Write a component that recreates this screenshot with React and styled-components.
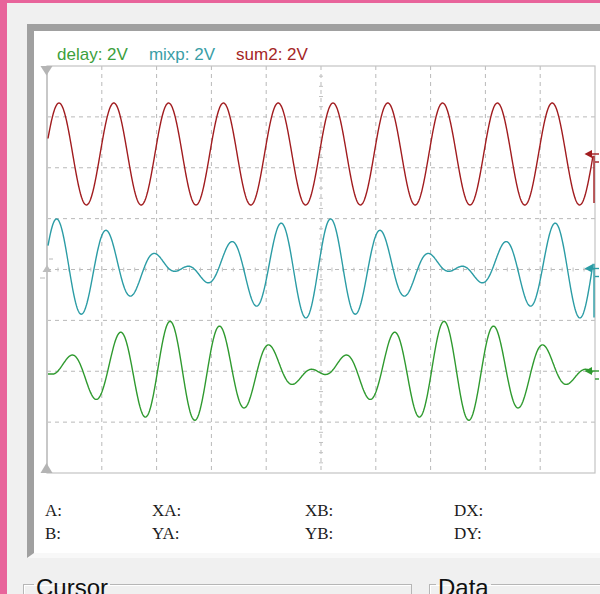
import React from "react";
import styled, { createGlobalStyle } from "styled-components";

// plot geometry, in page pixels
const LEFT = 47;
const RIGHT = 595;
const TOP = 66;
const BOTTOM = 473;
const DIV_X = (RIGHT - LEFT) / 10;
const DIV_Y = (BOTTOM - TOP) / 8;
const BEAT = DIV_X * 5;

const channels = [
  {
    name: "delay",
    color: "#2f9a2f",
    label: "#3ca03c",
    center: 371,
    drop: false,
    fn: (x) => {
      const t = Math.max(x, 54);
      return (
        371 -
        50 *
          Math.cos((Math.PI * (t - 180)) / BEAT) *
          Math.cos((2 * Math.PI * 5.5 * (t - 170)) / BEAT)
      );
    },
  },
  {
    name: "mixp",
    color: "#2b9ca5",
    label: "#3a9ea6",
    center: 268.5,
    drop: true,
    fn: (x) => {
      const u = x - 45;
      return (
        268.5 -
        50 *
          Math.cos((Math.PI * u) / BEAT) *
          Math.cos((2 * Math.PI * 5.5 * u) / BEAT - 1.476)
      );
    },
  },
  {
    name: "sum2",
    color: "#a11c1f",
    label: "#a42626",
    center: 154,
    drop: true,
    fn: (x) => 154 - 51 * Math.cos((2 * Math.PI * (x - 59)) / DIV_X),
  },
];

const tracePath = (fn) => {
  let d = "";
  for (let x = 48; x <= 593; x += 0.5) {
    d += (d ? "L" : "M") + x.toFixed(1) + "," + fn(x).toFixed(1);
  }
  return d;
};

const range = (n) => Array.from({ length: n }, (_, i) => i);

const Scope = () => {
  const cx = LEFT + DIV_X * 5;
  const cy = TOP + DIV_Y * 4;

  return (
    <Chart viewBox="34 65 566 420" width="566" height="420">
      {range(9).map((i) => (
        <GridLine
          key={"v" + i}
          x1={LEFT + DIV_X * (i + 1)}
          y1={TOP}
          x2={LEFT + DIV_X * (i + 1)}
          y2={BOTTOM}
        />
      ))}
      {range(7).map((i) => (
        <GridLine
          key={"h" + i}
          x1={LEFT}
          y1={TOP + DIV_Y * (i + 1)}
          x2={RIGHT}
          y2={TOP + DIV_Y * (i + 1)}
        />
      ))}
      {range(49).map((i) => (
        <Tick
          key={"tx" + i}
          x1={LEFT + (DIV_X / 5) * (i + 1)}
          y1={cy - 2}
          x2={LEFT + (DIV_X / 5) * (i + 1)}
          y2={cy + 2}
        />
      ))}
      {range(39).map((i) => (
        <Tick
          key={"ty" + i}
          x1={cx - 2}
          y1={TOP + (DIV_Y / 5) * (i + 1)}
          x2={cx + 2}
          y2={TOP + (DIV_Y / 5) * (i + 1)}
        />
      ))}

      <rect
        x={LEFT}
        y={TOP}
        width={RIGHT - LEFT}
        height={BOTTOM - TOP}
        fill="none"
        stroke="#c4c4c4"
        strokeWidth="1.2"
      />
      <line x1={LEFT} y1={TOP} x2={LEFT} y2={BOTTOM} stroke="#c8c8c8" strokeWidth="2" />

      {/* trigger / time markers */}
      <polygon points="40.5,66 52.5,66 46.5,75.5" fill="#b4b4b4" />
      <polygon points="40.5,473 52.5,473 46.5,463" fill="#b4b4b4" />
      <polygon points="42.5,272 51.5,272 47,265" fill="#bdbdbd" />
      <line x1="49" y1="259" x2="53" y2="259" stroke="#b8b8b8" />
      <line x1="40" y1="278" x2="45" y2="278" stroke="#b8b8b8" />

      {channels.map((ch) => {
        const last = ch.fn(593);
        return (
          <g key={ch.name} stroke={ch.color} fill="none" strokeWidth="1.4">
            <path d={tracePath(ch.fn)} strokeLinejoin="round" />
            {ch.drop && <line x1="594" y1={last} x2="594" y2={ch.center + 49} />}
            <polygon
              points={`584.5,${ch.center} 592,${ch.center - 4} 592,${ch.center + 4}`}
              fill={ch.color}
              stroke="none"
            />
            <line x1="591" y1={ch.center} x2="599" y2={ch.center} />
            <line x1="595" y1={ch.center + 8} x2="599" y2={ch.center + 8} />
          </g>
        );
      })}
    </Chart>
  );
};

const App = () => {
  return (
    <>
      <GlobalStyle />
      <Window>
        <Frame>
          <Legend>
            {channels.map((ch) => (
              <Trace key={ch.name} $color={ch.label}>
                {ch.name}: 2V
              </Trace>
            ))}
          </Legend>
          <Scope />
          <Readouts>
            <Cell>A:</Cell>
            <Cell>XA:</Cell>
            <Cell>XB:</Cell>
            <Cell>DX:</Cell>
            <Cell>B:</Cell>
            <Cell>YA:</Cell>
            <Cell>YB:</Cell>
            <Cell>DY:</Cell>
          </Readouts>
        </Frame>
        <Groups>
          <Group $width="389px" $inset="10px">
            <Caption>Cursor</Caption>
          </Group>
          <Group $width="200px" $inset="6px">
            <Caption>Data</Caption>
          </Group>
        </Groups>
      </Window>
    </>
  );
};

export default App;

const GlobalStyle = createGlobalStyle`
  html, body {
    margin: 0;
    width: 600px;
    height: 594px;
    overflow: hidden;
    background-color: #e8649b;
  }
`;

const Window = styled.div`
  margin: 3px 0 0 7px;
  padding-top: 21px;
  height: 591px;
  box-sizing: border-box;
  background-color: #f0f0f0;
  overflow: hidden;
`;

const Frame = styled.div`
  margin-left: 20px;
  width: 600px;
  height: 522px;
  background-color: #ffffff;
  border-left: 7px solid #a0a0a0;
  border-top: 7px solid #a0a0a0;
  border-bottom: 5px solid #f8f8f8;
`;

const Legend = styled.div`
  display: flex;
  gap: 21px;
  height: 20px;
  padding: 14px 0 0 23px;
  font-family: "Liberation Sans", Arial, sans-serif;
  font-size: 17px;
  line-height: 20px;
`;

const Trace = styled.span`
  color: ${(props) => props.$color};
`;

const Chart = styled.svg`
  display: block;
`;

const GridLine = styled.line`
  stroke: #b9b9b9;
  stroke-width: 1;
  stroke-dasharray: 4 4;
`;

const Tick = styled.line`
  stroke: #c2c2c2;
  stroke-width: 1;
`;

const Readouts = styled.div`
  display: grid;
  grid-template-columns: 107px 153px 149px 1fr;
  grid-auto-rows: 23px;
  margin-top: 14px;
  padding-left: 11px;
  font-family: "Liberation Serif", "Times New Roman", serif;
  font-size: 17px;
  line-height: 23px;
  color: #1c1c1c;
`;

const Cell = styled.div``;

const Groups = styled.div`
  display: flex;
  gap: 17px;
  margin-top: 8px;
  padding-left: 16px;
`;

const Group = styled.fieldset`
  flex-shrink: 0;
  margin: 0;
  width: ${(props) => props.$width};
  height: 60px;
  box-sizing: border-box;
  padding: 0 ${(props) => props.$inset};
  border: 1px solid #b6b6b6;
  box-shadow: inset 1px 1px 0 #ffffff;
`;

const Caption = styled.legend`
  padding: 8px 2px 0 2px;
  font-family: "Liberation Sans", Arial, sans-serif;
  font-size: 24px;
  line-height: 28px;
  color: #111111;
`;
